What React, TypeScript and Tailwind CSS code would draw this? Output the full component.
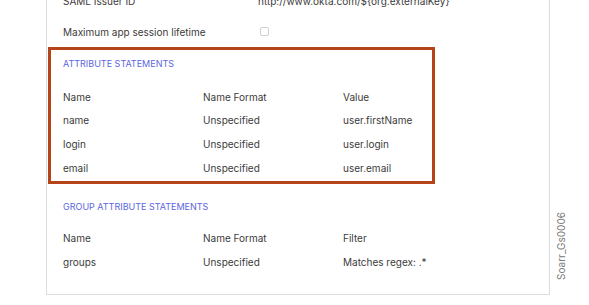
const ATTRS = [
  { name: "name", format: "Unspecified", value: "user.firstName" },
  { name: "login", format: "Unspecified", value: "user.login" },
  { name: "email", format: "Unspecified", value: "user.email" },
];

function Row({ cells, className = "h-6" }: { cells: string[]; className?: string }) {
  return (
    <div className={`flex items-center ${className}`}>
      {cells.map((c, i) => (
        <div key={i} className="w-[140px] shrink-0 whitespace-nowrap">
          {c}
        </div>
      ))}
    </div>
  );
}

export default function App() {
  return (
    <div
      className="relative w-[589px] h-[305px] overflow-hidden bg-white text-[10px] leading-[14px] text-[#3b3b3b]"
      style={{ fontFamily: "Inter, 'Liberation Sans', sans-serif" }}
    >
      <div className="-mt-[15px] ml-[46px] w-[504px] border border-t-0 border-[#dcdcdc]">
        {/* settings rows above */}
        <div className="flex h-8 items-center pl-4">
          <div className="w-[195px] shrink-0">SAML Issuer ID</div>
          <div>http://www.okta.com/${"{"}org.externalKey{"}"}</div>
        </div>
        <div className="flex h-[30px] items-center pl-4">
          <div className="w-[197px] shrink-0">Maximum app session lifetime</div>
          <div className="-mt-[2px] h-[9px] w-[9px] rounded-[2px] border border-[#d0d0d0] bg-white" />
        </div>

        {/* attribute statements, highlighted */}
        <div className="ml-[1px] w-[387px] border-[3px] border-[#b5441b] pb-[1px] pl-3">
          <div className="pt-[7px] pb-[14px] text-[9px] font-normal text-[#5b66e0]">
            ATTRIBUTE STATEMENTS
          </div>
          <Row cells={["Name", "Name Format", "Value"]} className="h-[23px]" />
          {ATTRS.map((a) => (
            <Row key={a.name} cells={[a.name, a.format, a.value]} />
          ))}
        </div>

        {/* group attribute statements */}
        <div className="pl-4 pt-4 pb-5">
          <div className="text-[9px] font-normal text-[#5b66e0]">
            GROUP ATTRIBUTE STATEMENTS
          </div>
          <div className="mt-3">
            <Row cells={["Name", "Name Format", "Filter"]} />
            <Row cells={["groups", "Unspecified", "Matches regex: .*"]} />
          </div>
        </div>
      </div>

      {/* watermark */}
      <div className="absolute left-[561px] top-[246px] -translate-x-1/2 -translate-y-1/2 -rotate-90 whitespace-nowrap text-[10px] text-[#7a7a7a]">
        Soarr_Gs0006
      </div>
    </div>
  );
}
